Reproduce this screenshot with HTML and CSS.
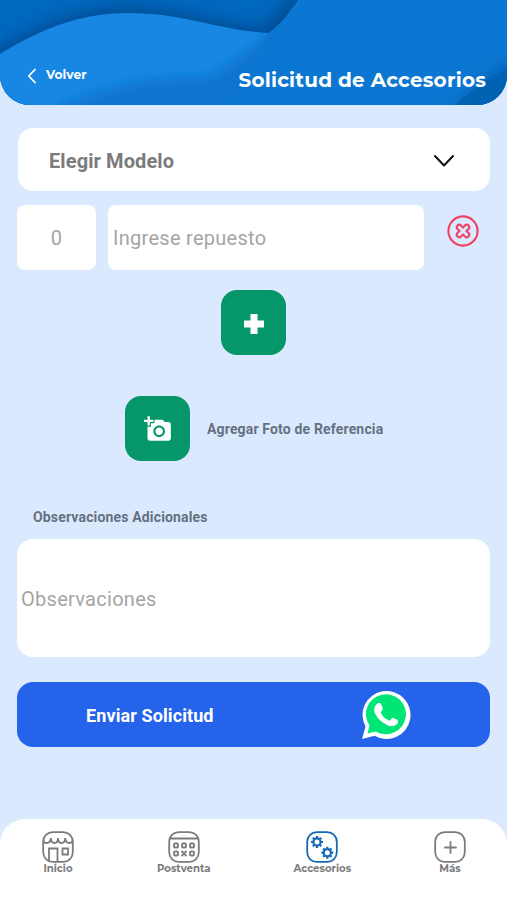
FILE: index.html
```html
<!DOCTYPE html>
<html lang="es">
<head>
    <meta charset="UTF-8">
    <meta name="viewport" content="width=device-width, initial-scale=1.0">
    <title>Solicitud de Accesorios</title>
    <link rel="stylesheet" href="styles.css">
</head>
<body>
    <header class="header">
        <svg class="header-waves" viewBox="0 0 507 105" preserveAspectRatio="none" aria-hidden="true">
            <defs>
                <filter id="shadow" x="-20%" y="-50%" width="140%" height="200%">
                    <feGaussianBlur stdDeviation="8"/>
                </filter>
                <filter id="soft" x="-20%" y="-50%" width="140%" height="200%">
                    <feGaussianBlur stdDeviation="6"/>
                </filter>
                <clipPath id="wave">
                    <path d="M0 54C42 28 82 13 128 13C185 13 216 30 268 33L520 33V120H0Z"/>
                </clipPath>
                <clipPath id="front">
                    <path d="M298 0C288 14 279 26 268 33L250 70L230 105H507V0Z"/>
                </clipPath>
            </defs>
            <rect width="507" height="105" fill="#0069c0"/>
            <path d="M-20 58C42 20 82 6 128 6C185 6 216 24 264 26L304 -20L330 120H-20Z" fill="#004c91" opacity=".85" filter="url(#shadow)"/>
            <path d="M0 54C42 28 82 13 128 13C185 13 216 30 268 33L300 105H0Z" fill="#1787e3"/>
            <g clip-path="url(#wave)">
                <path d="M300 12L268 34C240 57 218 77 194 78C142 77 108 87 58 107V130H560V12Z" fill="#0b75d0" filter="url(#soft)"/>
            </g>
            <path d="M298 0C288 14 279 26 268 33C244 52 220 76 194 80C142 80 108 91 62 105H507V0Z" fill="#0b77d2" clip-path="url(#front)"/>
            <path d="M515 58C490 73 470 88 452 110H515Z" fill="#00509b" opacity=".45" filter="url(#soft)"/>
            <path d="M507 68C492 78 475 85 456 105H507Z" fill="#0062b2"/>
        </svg>
        <a class="back" href="#">
            <svg class="back-icon" viewBox="0 0 10 16"><path d="M8 1.5L1.8 8L8 14.5"/></svg>
            <span class="back-text">Volver</span>
        </a>
        <h1 class="title">Solicitud de Accesorios</h1>
    </header>

    <main class="form">
        <div class="select">
            <span>Elegir Modelo</span>
            <svg class="select-arrow" viewBox="0 0 22 14"><path d="M2 2L11 11.5L20 2"/></svg>
        </div>

        <div class="item-row">
            <div class="field quantity">0</div>
            <div class="field part">Ingrese repuesto</div>
            <svg class="remove" viewBox="0 0 32 32">
                <circle cx="16" cy="16" r="14.6"/>
                <path d="M16 12.6L18 10.4Q19.8 8.9 21.5 10.5Q23.1 12.2 21.6 14L19.4 16L21.6 18Q23.1 19.8 21.5 21.5Q19.8 23.1 18 21.6L16 19.4L14 21.6Q12.2 23.1 10.5 21.5Q8.9 19.8 10.4 18L12.6 16L10.4 14Q8.9 12.2 10.5 10.5Q12.2 8.9 14 10.4Z"/>
            </svg>
        </div>

        <button class="square-button add" aria-label="Agregar">
            <svg width="22" height="22" viewBox="0 0 22 22"><path d="M7.5 1H14.5V7.5H21V14.5H14.5V21H7.5V14.5H1V7.5H7.500Z" fill="#fff"/></svg>
        </button>

        <div class="photo-row">
            <button class="square-button" aria-label="Agregar foto">
                <svg width="28" height="28" viewBox="0 0 24 24" fill="#fff">
                    <path d="M3 4V1h2v3h3v2H5v3H3V6H0V4h3zm3 6V7h3V4h7l1.830 2H21c1.100 0 2 .9 2 2v12c0 1.100-.9 2-2 2H5c-1.100 0-2-.9-2-2V10h3zm7 9c2.760 0 5-2.240 5-5s-2.240-5-5-5-5 2.240-5 5 2.240 5 5 5zm-3.200-5c0 1.770 1.430 3.200 3.200 3.200s3.200-1.430 3.200-3.200-1.430-3.200-3.200-3.200-3.200 1.430-3.200 3.200z"/>
                </svg>
            </button>
            <span class="label">Agregar Foto de Referencia</span>
        </div>

        <div class="label notes-label">Observaciones Adicionales</div>
        <div class="field notes">Observaciones</div>

        <button class="send">
            <span class="send-text">Enviar Solicitud</span>
            <svg class="whatsapp" viewBox="0 0 50 50">
                <path d="M1 49L4.500 36.500A24 24 0 1 1 13.500 45.700Z" fill="#fff"/>
                <path d="M6.500 43.500L8.500 35.600A20 20 0 1 1 14.700 41.400Z" fill="#00e676"/>
                <path d="M16.200 13.700C17.300 12.500 19.400 12.700 20 14L21.800 18.200C22.300 19.600 20 21.600 19.600 22.500C21.300 26.400 24.400 29.200 28.500 30.700C29.600 30.100 31.100 27.400 32.300 27.900L36.500 29.900C37.500 30.500 37.100 32.700 36.200 33.800C33.800 36.600 29.800 36.700 26 34.900C20.700 32.700 16.900 28.900 14.300 24.100C12.400 20.400 13.100 16.100 16.200 13.700Z" fill="#fff"/>
            </svg>
        </button>
    </main>

    <nav class="tabs">
        <a class="tab" href="#">
            <svg class="tab-icon" viewBox="0 0 32 32">
                <rect x="1.200" y="1.200" width="29.600" height="29.600" rx="9.500"/>
                <path d="M1.500 10Q2 12 4.500 12Q8.500 12 8.800 7Q9 12 12.500 12Q16 12 16 7Q16 12 19.500 12Q23 12 23.200 7Q23.500 12 27.500 12Q30 12 30.500 10"/>
                <path d="M7 30V17.500H15.500V30M20.500 17.500H26V23.500H20.500Z"/>
            </svg>
            <span>Inicio</span>
        </a>
        <a class="tab" href="#">
            <svg class="tab-icon" viewBox="0 0 32 32">
                <rect x="1.200" y="1.200" width="29.600" height="29.600" rx="9.500"/>
                <path d="M3 7.500H29"/>
                <rect x="6" y="12.500" width="4" height="4" rx="1"/>
                <rect x="14" y="12.500" width="4" height="4" rx="1"/>
                <rect x="22" y="12.500" width="4" height="4" rx="1"/>
                <rect x="6" y="20.500" width="4" height="4" rx="1"/>
                <path d="M14 20.500L18 24.500M18 20.500L14 24.500"/>
                <rect x="22" y="20.500" width="4" height="4" rx="1"/>
            </svg>
            <span>Postventa</span>
        </a>
        <a class="tab" href="#">
            <svg class="tab-icon active" viewBox="0 0 32 32">
                <rect x="1.200" y="1.200" width="29.600" height="29.600" rx="9.500"/>
                <g class="gear">
                    <circle cx="11" cy="11" r="3.600"/>
                    <path d="M11 5V7M11 15V17M5 11H7M15 11H17M6.800 6.800L8.200 8.200M13.800 13.800L15.200 15.200M15.200 6.800L13.800 8.200M8.200 13.800L6.800 15.200"/>
                </g>
                <g class="gear" transform="translate(10.300 10.700)">
                    <circle cx="11" cy="11" r="3.600"/>
                    <path d="M11 5V7M11 15V17M5 11H7M15 11H17M6.800 6.800L8.200 8.200M13.800 13.800L15.200 15.200M15.200 6.800L13.800 8.200M8.200 13.800L6.800 15.200"/>
                </g>
            </svg>
            <span>Accesorios</span>
        </a>
        <a class="tab" href="#">
            <svg class="tab-icon" viewBox="0 0 32 32">
                <rect x="1.200" y="1.200" width="29.600" height="29.600" rx="9.500"/>
                <path d="M16.500 11V22M11 16.500H22"/>
            </svg>
            <span>Más</span>
        </a>
    </nav>
</body>
</html>
```
FILE: styles.css
```css
* {
    box-sizing: border-box;
}
body {
    margin: 0;
    height: 900px;
    display: flex;
    flex-direction: column;
    background-color: #dbe9fe;
    font-family: Roboto, sans-serif;
    overflow: hidden;
}
a {
    text-decoration: none;
}
button {
    border: none;
    padding: 0;
    font-family: inherit;
}
svg {
    flex-shrink: 0;
}

/* Header */
.header {
    position: relative;
    height: 105px;
    display: flex;
    justify-content: space-between;
    align-items: flex-start;
    padding: 66px 21px 0 27px;
    border-radius: 0 0 30px 30px;
    overflow: hidden;
    color: #fff;
    font-family: Montserrat, Inter, sans-serif;
}
.header-waves {
    position: absolute;
    top: 0;
    left: 0;
    width: 100%;
    height: 100%;
}
.back {
    position: relative;
    display: flex;
    gap: 9px;
    color: #fff;
}
.back-icon {
    width: 10px;
    height: 16px;
    margin-top: 2px;
    fill: none;
    stroke: #fff;
    stroke-width: 1.8;
    stroke-linecap: round;
    stroke-linejoin: round;
}
.back-text {
    font-size: 12.3px;
    font-weight: 700;
    line-height: 17px;
}
.title {
    position: relative;
    margin: 0;
    font-size: 20px;
    font-weight: 700;
    line-height: 28px;
    letter-spacing: 0.2px;
    white-space: nowrap;
}

/* Form */
.form {
    flex: 1;
    display: flex;
    flex-direction: column;
    padding: 23px 17px 0;
}
.select {
    height: 63px;
    margin: 0 0 14px 1px;
    padding: 3px 35px 0 31px;
    display: flex;
    align-items: center;
    justify-content: space-between;
    border-radius: 15px;
    background-color: #fff;
    color: #7b7b7b;
    font-size: 20px;
    font-weight: 700;
    letter-spacing: 0.1px;
}
.select-arrow {
    width: 22px;
    height: 14px;
    fill: none;
    stroke: #111;
    stroke-width: 2;
    stroke-linecap: round;
    stroke-linejoin: round;
}
.item-row {
    display: flex;
    align-items: flex-start;
    gap: 12px;
    margin-bottom: 20px;
}
.field {
    height: 65px;
    display: flex;
    align-items: center;
    border-radius: 8px;
    background-color: #fff;
    color: #a5a5a5;
    font-size: 20px;
    letter-spacing: 0.28px;
}
.quantity {
    width: 79px;
    justify-content: center;
}
.part {
    width: 316px;
    padding-left: 5px;
}
.remove {
    width: 32px;
    height: 32px;
    margin: 10px 0 0 11px;
    fill: none;
    stroke: #ed4261;
    stroke-width: 2.1;
    stroke-linejoin: round;
}
.square-button {
    width: 65px;
    height: 65px;
    display: flex;
    align-items: center;
    justify-content: center;
    border-radius: 16px;
    background-color: #059669;
}
.add {
    align-self: center;
    padding-top: 2px;
    margin-bottom: 41px;
}
.photo-row {
    display: flex;
    align-items: center;
    gap: 17px;
    padding-left: 108px;
}
.label {
    color: #65717f;
    font-size: 14px;
    font-weight: 700;
    line-height: 18px;
    letter-spacing: 0.16px;
}
.notes-label {
    margin: 47px 0 13px 16px;
}
.notes {
    height: 118px;
    padding: 1px 0 0 4px;
    border-radius: 16px;
}
.send {
    height: 65px;
    margin-top: 25px;
    padding: 0 79px 0 69px;
    display: flex;
    align-items: center;
    justify-content: space-between;
    border-radius: 16px;
    background-color: #2563eb;
    color: #fff;
}
.send-text {
    padding-top: 2px;
    font-size: 18px;
    font-weight: 700;
    letter-spacing: 0.1px;
}
.whatsapp {
    width: 50px;
    height: 50px;
}

/* Bottom tabs */
.tabs {
    height: 81px;
    display: flex;
    justify-content: space-between;
    padding: 12px 41px 0 42px;
    border-radius: 25px 25px 0 0;
    background-color: #fff;
}
.tab {
    display: flex;
    flex-direction: column;
    align-items: center;
    color: #7b7b7b;
    font-family: Montserrat, Inter, sans-serif;
    font-size: 10.2px;
    font-weight: 700;
    line-height: 12px;
}
.tab-icon {
    width: 32px;
    height: 32px;
    fill: none;
    stroke: #7b7b7b;
    stroke-width: 1.8;
    stroke-linecap: round;
}
.active {
    stroke: #1769b5;
}
.gear {
    stroke-width: 2.2;
    stroke-linecap: butt;
}
```
